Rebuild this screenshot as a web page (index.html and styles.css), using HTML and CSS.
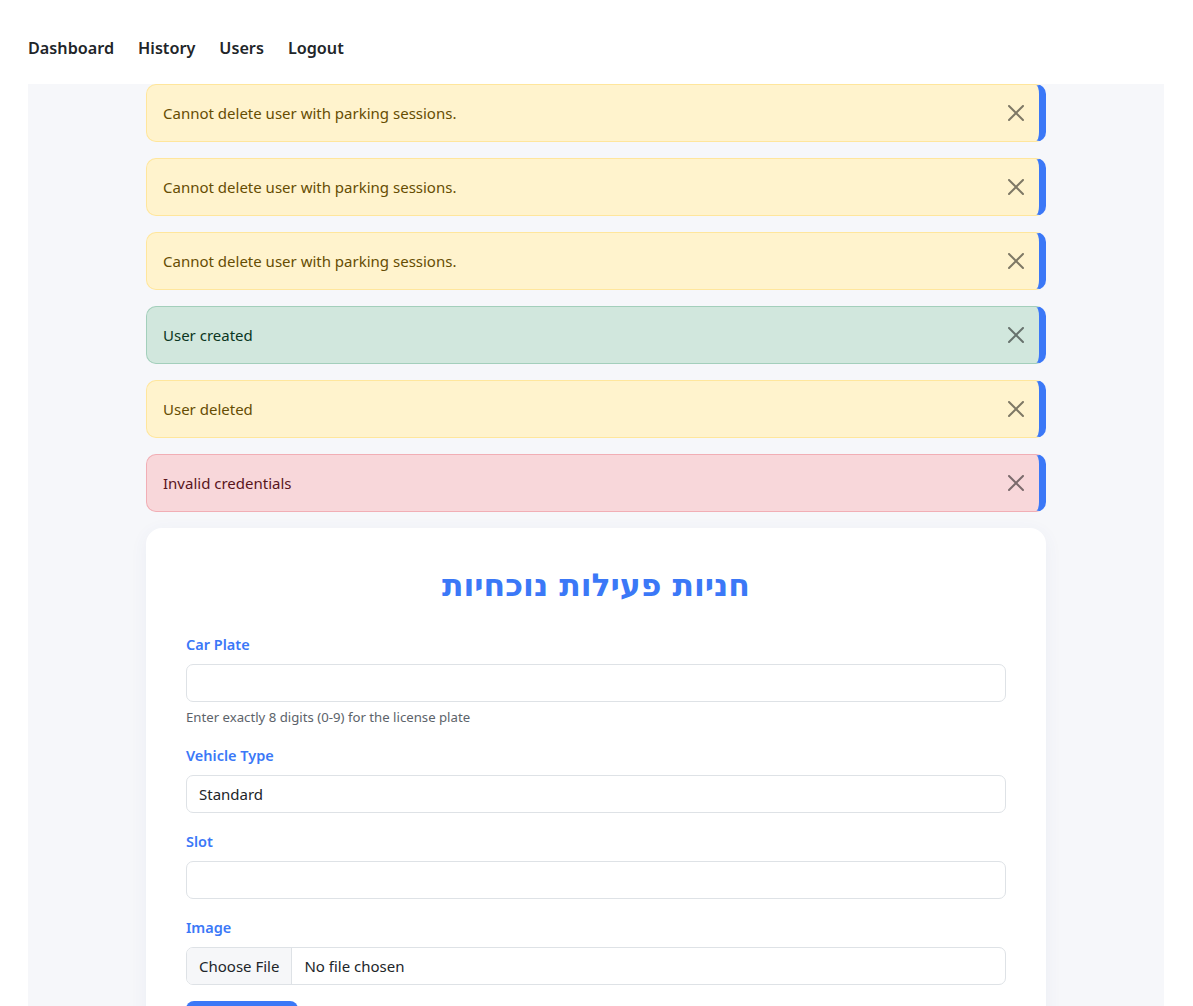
FILE: index.html
```html
<!DOCTYPE html>
<html lang="en">
<head>
<meta charset="utf-8">
<title>Parking</title>
<link rel="stylesheet" href="styles.css">
</head>
<body>
<nav class="topnav">
  <a href="#" class="nav-link">Dashboard</a>
  <a href="#" class="nav-link">History</a>
  <a href="#" class="nav-link">Users</a>
  <a href="#" class="nav-link">Logout</a>
</nav>
<main class="page">
  <div class="content">
    <div class="alert alert-warning">Cannot delete user with parking sessions.<button class="btn-close" aria-label="Close"><svg viewBox="0 0 16 16" width="16" height="16"><path d="M.293.293a1 1 0 0 1 1.414 0L8 6.586 14.293.293a1 1 0 1 1 1.414 1.414L9.414 8l6.293 6.293a1 1 0 0 1-1.414 1.414L8 9.414l-6.293 6.293a1 1 0 0 1-1.414-1.414L6.586 8 .293 1.707a1 1 0 0 1 0-1.414z"/></svg></button></div>
    <div class="alert alert-warning">Cannot delete user with parking sessions.<button class="btn-close" aria-label="Close"><svg viewBox="0 0 16 16" width="16" height="16"><path d="M.293.293a1 1 0 0 1 1.414 0L8 6.586 14.293.293a1 1 0 1 1 1.414 1.414L9.414 8l6.293 6.293a1 1 0 0 1-1.414 1.414L8 9.414l-6.293 6.293a1 1 0 0 1-1.414-1.414L6.586 8 .293 1.707a1 1 0 0 1 0-1.414z"/></svg></button></div>
    <div class="alert alert-warning">Cannot delete user with parking sessions.<button class="btn-close" aria-label="Close"><svg viewBox="0 0 16 16" width="16" height="16"><path d="M.293.293a1 1 0 0 1 1.414 0L8 6.586 14.293.293a1 1 0 1 1 1.414 1.414L9.414 8l6.293 6.293a1 1 0 0 1-1.414 1.414L8 9.414l-6.293 6.293a1 1 0 0 1-1.414-1.414L6.586 8 .293 1.707a1 1 0 0 1 0-1.414z"/></svg></button></div>
    <div class="alert alert-success">User created<button class="btn-close" aria-label="Close"><svg viewBox="0 0 16 16" width="16" height="16"><path d="M.293.293a1 1 0 0 1 1.414 0L8 6.586 14.293.293a1 1 0 1 1 1.414 1.414L9.414 8l6.293 6.293a1 1 0 0 1-1.414 1.414L8 9.414l-6.293 6.293a1 1 0 0 1-1.414-1.414L6.586 8 .293 1.707a1 1 0 0 1 0-1.414z"/></svg></button></div>
    <div class="alert alert-warning">User deleted<button class="btn-close" aria-label="Close"><svg viewBox="0 0 16 16" width="16" height="16"><path d="M.293.293a1 1 0 0 1 1.414 0L8 6.586 14.293.293a1 1 0 1 1 1.414 1.414L9.414 8l6.293 6.293a1 1 0 0 1-1.414 1.414L8 9.414l-6.293 6.293a1 1 0 0 1-1.414-1.414L6.586 8 .293 1.707a1 1 0 0 1 0-1.414z"/></svg></button></div>
    <div class="alert alert-danger">Invalid credentials<button class="btn-close" aria-label="Close"><svg viewBox="0 0 16 16" width="16" height="16"><path d="M.293.293a1 1 0 0 1 1.414 0L8 6.586 14.293.293a1 1 0 1 1 1.414 1.414L9.414 8l6.293 6.293a1 1 0 0 1-1.414 1.414L8 9.414l-6.293 6.293a1 1 0 0 1-1.414-1.414L6.586 8 .293 1.707a1 1 0 0 1 0-1.414z"/></svg></button></div>

    <section class="card">
      <h2 class="card-title" dir="rtl">חניות פעילות נוכחיות</h2>
      <form class="form">
        <div class="group">
          <label class="label" for="plate">Car Plate</label>
          <input class="control" id="plate" type="text">
          <div class="help">Enter exactly 8 digits (0-9) for the license plate</div>
        </div>
        <div class="group">
          <label class="label" for="vtype">Vehicle Type</label>
          <select class="control select" id="vtype">
            <option>Standard</option>
          </select>
        </div>
        <div class="group">
          <label class="label" for="slot">Slot</label>
          <input class="control" id="slot" type="text">
        </div>
        <div class="group">
          <span class="label">Image</span>
          <div class="file-control">
            <span class="file-btn">Choose File</span>
            <span class="file-name">No file chosen</span>
          </div>
        </div>
        <button type="button" class="btn-primary">Start Parking</button>
      </form>
    </section>
  </div>
</main>
</body>
</html>
```

FILE: styles.css
```css
* { box-sizing: border-box; }

html, body {
  margin: 0;
  padding: 0;
  background: #ffffff;
  font-family: "Noto Sans", "Open Sans", "DejaVu Sans", sans-serif;
  color: #212529;
}

.topnav {
  display: flex;
  gap: 24px;
  padding: 36px 28px 24px;
  height: 84px;
}

.nav-link {
  font-size: 16.2px;
  font-weight: 600;
  line-height: 24px;
  color: #212529;
  text-decoration: none;
}

.page {
  margin: 0 29px 0 28px;
  background: #f6f7fa;
  min-height: 940px;
}

.content {
  max-width: 900px;
  margin: 0 auto;
}

.alert {
  position: relative;
  padding: 16px 48px 16px 16px;
  margin-bottom: 16px;
  border: 1px solid transparent;
  border-right: 7px solid #3b78f7;
  border-radius: 10px;
  font-size: 15px;
  line-height: 24px;
}

.alert-warning {
  background: #fff3cd;
  border-color: #ffe69c;
  border-right-color: #3b78f7;
  color: #664d03;
}

.alert-success {
  background: #d1e7dd;
  border-color: #a3cfbb;
  border-right-color: #3b78f7;
  color: #0a3622;
}

.alert-danger {
  background: #f8d7da;
  border-color: #f1aeb5;
  border-right-color: #3b78f7;
  color: #58151c;
}

.btn-close {
  position: absolute;
  top: 0;
  right: 0;
  padding: 20px 15px;
  border: 0;
  background: transparent;
  line-height: 0;
  cursor: pointer;
}

.btn-close svg {
  fill: #000;
  opacity: 0.5;
}

.card {
  background: #ffffff;
  border-radius: 16px;
  box-shadow: 0 4px 18px rgba(60, 80, 160, 0.06);
  padding: 38px 40px 40px;
}

.card-title {
  margin: 0 0 30px;
  text-align: center;
  color: #3b78f7;
  font-size: 31.5px;
  font-weight: 700;
  line-height: 38px;
  font-family: "DejaVu Sans", "Liberation Sans", sans-serif;
}

.group {
  margin-bottom: 18px;
}

.label {
  display: block;
  font-size: 14.5px;
  font-weight: 600;
  line-height: 20px;
  color: #3b78f7;
  margin-bottom: 10px;
}

.control {
  display: block;
  width: 100%;
  height: 38px;
  padding: 6px 12px;
  font-family: inherit;
  font-size: 15px;
  line-height: 24px;
  color: #212529;
  background: #ffffff;
  border: 1px solid #dee2e6;
  border-radius: 7px;
  outline: none;
}

.select {
  appearance: none;
  -webkit-appearance: none;
}

.help {
  margin-top: 6px;
  font-size: 13.2px;
  line-height: 19px;
  color: #5c636a;
}

.file-control {
  display: flex;
  height: 38px;
  border: 1px solid #dee2e6;
  border-radius: 7px;
  overflow: hidden;
  font-size: 15px;
  line-height: 24px;
}

.file-btn {
  display: flex;
  align-items: center;
  padding: 0 12px;
  background: #f6f7f9;
  border-right: 1px solid #dee2e6;
  color: #212529;
}

.file-name {
  display: flex;
  align-items: center;
  padding: 0 12px;
  color: #212529;
}

.btn-primary {
  display: block;
  margin-top: -2px;
  width: 112px;
  height: 38px;
  padding: 12px 0 0;
  border: 0;
  border-radius: 8px;
  background: #3b78f7;
  color: #ffffff;
  font-family: inherit;
  font-size: 15px;
  font-weight: 600;
  line-height: 24px;
}
```
